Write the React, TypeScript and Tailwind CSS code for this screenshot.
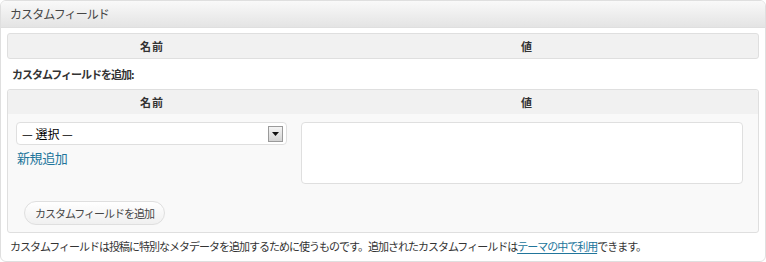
const jp = { fontFamily: '"Noto Sans CJK JP", "Liberation Sans", sans-serif' };

function HeaderRow() {
  return (
    <div className="grid grid-cols-[288px_1fr] text-[11px] font-bold text-[#333] tracking-[1px]">
      <div className="text-center">名前</div>
      <div className="text-center">値</div>
    </div>
  );
}

export default function App() {
  return (
    <div className="w-[766px] h-[262px] bg-white" style={jp}>
      <div className="h-[262px] border border-[#dfdfdf] rounded-[6px] overflow-hidden flex flex-col">
        <div className="h-[27px] shrink-0 border-b border-[#dfdfdf] bg-gradient-to-b from-[#f9f9f9] to-[#e4e4e4] flex items-center pl-[9px] text-[12px] tracking-[-0.9px] text-[#464646]">
          カスタムフィールド
        </div>

        <div className="px-[6px] pt-[5px]">
          <div className="h-[26px] border border-[#dfdfdf] rounded-[3px] bg-[#f1f1f1] flex items-center">
            <div className="w-full">
              <HeaderRow />
            </div>
          </div>

          <div className="h-[30px] flex items-center pl-[5px] text-[11px] font-bold tracking-[-1px] text-[#333]">
            カスタムフィールドを追加:
          </div>

          <div className="border border-[#dfdfdf] rounded-[3px] bg-[#f9f9f9] h-[144px] flex flex-col">
            <div className="h-[24px] bg-[#f1f1f1] flex items-center rounded-t-[3px]">
              <div className="w-full">
                <HeaderRow />
              </div>
            </div>
            <div className="grid grid-cols-[288px_1fr] pt-[8px]">
              <div className="pl-[8px] pr-[9px]">
                <div className="h-[23px] bg-white border border-[#dfdfdf] rounded-[4px] flex items-center justify-between pl-[5px] pr-[3px]">
                  <span className="text-[12px] text-black whitespace-pre">— 選択 —</span>
                  <div className="w-[15px] h-[16px] border border-[#9a9a9a] bg-gradient-to-b from-[#f4f4f4] to-[#d4d4d4] flex items-center justify-center">
                    <svg width="7" height="4" viewBox="0 0 7 4">
                      <path d="M0 0h7L3.5 4z" fill="#111" />
                    </svg>
                  </div>
                </div>
                <a className="block mt-[3px] pl-[1px] text-[13px] text-[#21759b] tracking-[-0.4px]">新規追加</a>
              </div>
              <div className="pl-[5px] pr-[15px]">
                <div className="h-[62px] bg-white border border-[#dfdfdf] rounded-[4px]" />
              </div>
            </div>
            <div className="pl-[16px] mt-[15px]">
              <button className="h-[24px] px-[10px] rounded-full border border-[#dfdfdf] bg-gradient-to-b from-white to-[#f0f0f0] text-[11px] tracking-[-1px] text-[#464646]">
                カスタムフィールドを追加
              </button>
            </div>
          </div>

          <div className="pt-[5px] pl-[3px] text-[11px] tracking-[-1px] text-[#333] whitespace-nowrap">
            カスタムフィールドは投稿に特別なメタデータを追加するために使うものです。追加されたカスタムフィールドは
            <a className="text-[#21759b] underline underline-offset-2">テーマの中で利用</a>
            できます。
          </div>
        </div>
      </div>
    </div>
  );
}
